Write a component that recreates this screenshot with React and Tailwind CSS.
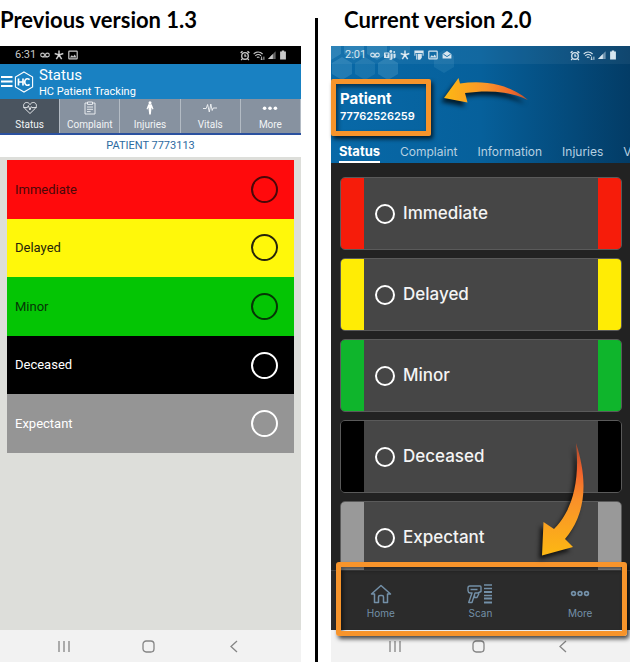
import React from "react";

const triageOld = [
  { name: "Immediate", row: "bg-[#ff0a0c] text-[#4a0808]", ring: "border-[#4a0808]" },
  { name: "Delayed", row: "bg-[#fff80a] text-[#26240a]", ring: "border-[#26240a]" },
  { name: "Minor", row: "bg-[#04c504] text-[#063506]", ring: "border-[#063506]" },
  { name: "Deceased", row: "bg-black text-white", ring: "border-white" },
  { name: "Expectant", row: "bg-[#959595] text-white", ring: "border-white" },
];

const triageNew = [
  { name: "Immediate", side: "border-x-[#f61c0a]" },
  { name: "Delayed", side: "border-x-[#ffec05]" },
  { name: "Minor", side: "border-x-[#0fb52c]" },
  { name: "Deceased", side: "border-x-black" },
  { name: "Expectant", side: "border-x-[#999999]" },
];

function Voicemail() {
  return (
    <svg width="10" height="10" viewBox="0 0 10 10" fill="none" stroke="currentColor" strokeWidth="1.1">
      <circle cx="2.6" cy="5" r="1.9" />
      <circle cx="7.4" cy="5" r="1.9" />
      <path d="M2.6 6.9h4.8" />
    </svg>
  );
}

function Burst() {
  return (
    <svg width="10" height="10" viewBox="0 0 10 10" fill="none" stroke="currentColor" strokeWidth="1.5">
      <path d="M5 5V.4M5 5L.7 3.5M5 5l4.3-1.5M5 5L2.3 9.2M5 5l2.7 4.2" />
      <circle cx="5" cy="5" r=".8" fill="#fff" stroke="none" />
    </svg>
  );
}

function Photo() {
  return (
    <svg width="10" height="10" viewBox="0 0 10 10" fill="none" stroke="currentColor" strokeWidth="1.2">
      <rect x=".8" y="1.2" width="8.4" height="7.6" rx=".6" />
      <path d="M1.8 7.6l2-2.4 1.4 1.2 1.6-2 1.6 3.2z" fill="currentColor" stroke="none" />
    </svg>
  );
}

function Teams() {
  return (
    <svg width="12" height="10" viewBox="0 0 12 10" fill="currentColor">
      <rect x="0" y="2.4" width="5.6" height="5.6" rx=".6" />
      <circle cx="6.8" cy="1.5" r="1.4" />
      <circle cx="10.2" cy="2.1" r="1" />
      <path d="M6.4 3.6h2.2v4.6c0 1-1 1.8-2.4 1.6L4.6 8.8h1.8zM9.4 3.8h2.2v3c0 1-.8 1.6-2 1.6z" />
      <path d="M1.4 4h2.8M2.8 4v3" stroke="#146aa4" strokeWidth=".9" />
    </svg>
  );
}

function Printer() {
  return (
    <svg width="10" height="10" viewBox="0 0 10 10" fill="currentColor">
      <path d="M.4.6h9.2v5.200H8.600V3H1.400v2.800h-1z" />
      <path d="M2.200 3.700h1.200v5.800H2.200zM4 3.700h3.800v4l-1.600 2H4z" />
    </svg>
  );
}

function Mail() {
  return (
    <svg width="10" height="10" viewBox="0 0 10 10" fill="currentColor">
      <path d="M.6 4L5 .9 9.4 4v4.6H.6z" />
      <path d="M1.4 4.2L5 6.6l3.6-2.4" fill="none" stroke="#146aa4" strokeWidth=".9" />
    </svg>
  );
}

function SystemIcons() {
  return (
    <span className="flex items-center gap-[3px]">
      <svg width="10" height="11" viewBox="0 0 11 11" fill="none" stroke="currentColor" strokeWidth="1.5">
        <circle cx="5.5" cy="6" r="3.6" />
        <path d="M5.5 4v2.2h1.6M.7 2.6L2.8.8M10.3 2.6L8.2.8M2.4 9.4l-1.2 1M8.6 9.4l1.2 1" />
      </svg>
      <svg width="12" height="11" viewBox="0 0 12 11" fill="none" stroke="currentColor" strokeWidth="1.1">
        <path d="M.7 4C3.3 1.4 7 1.4 9.6 4M2.3 5.8c1.8-1.6 4-1.6 5.8 0M3.9 7.5c.8-.7 1.7-.7 2.5 0" />
        <path d="M8.600 6.500v3.400M7.500 8.800l1.100 1.100 1.100-1.100M10.900 9.900V6.600" strokeWidth=".9" />
      </svg>
      <svg width="8" height="10" viewBox="0 0 9 10" fill="currentColor">
        <path d="M0 9.4L8.6.8v8.6z" opacity=".5" />
        <path d="M0 9.4l5.4-5.4v5.4z" />
      </svg>
      <svg width="8" height="10" viewBox="0 0 8 10" fill="currentColor">
        <path d="M2.800.4h2.400v1.2h1.700v8H1.100v-8h1.700z" />
      </svg>
    </span>
  );
}

function AndroidNav() {
  return (
    <nav aria-label="System navigation" className="flex h-8 shrink-0 items-center justify-around bg-[#f2f2f2] pl-[22px] pr-[25px] text-[#858585]">
      <button aria-label="Recent apps">
        <svg width="12" height="13" viewBox="0 0 12 13" stroke="currentColor" strokeWidth="1.3">
          <path d="M1 1v11M6 1v11M11 1v11" />
        </svg>
      </button>
      <button aria-label="Home screen">
        <svg width="13" height="13" viewBox="0 0 13 13" fill="none" stroke="currentColor" strokeWidth="1.3">
          <rect x="1" y="1" width="11" height="11" rx="3.2" />
        </svg>
      </button>
      <button aria-label="Back">
        <svg width="12" height="13" viewBox="0 0 12 13" fill="none" stroke="currentColor" strokeWidth="1.3">
          <path d="M9 1L3 6.5 9 12" />
        </svg>
      </button>
    </nav>
  );
}

const oldTabs = [
  {
    name: "Status",
    icon: (
      <>
        <path d="M8 12.5L2.6 7.3C.4 4.6 2 1.5 4.6 1.5 6.300 1.500 7.400 2.500 8 3.600 8.600 2.500 9.700 1.500 11.400 1.500 14 1.500 15.600 4.600 13.400 7.300z" />
        <path d="M1.400 6.600h4l1-2 1.500 4.400 1.400-3.400.7 1h4.600" />
      </>
    ),
  },
  {
    name: "Complaint",
    icon: (
      <>
        <path d="M5.500 2H3v11h10V2h-2.500M5.500 1h5v2.400h-5z" />
        <path d="M5 6h6M5 8.300h6M5 10.600h3.600" />
      </>
    ),
  },
  {
    name: "Injuries",
    icon: (
      <g fill="#ffffff" stroke="none">
        <circle cx="8" cy="1.700" r="1.500" />
        <path d="M6.300 3.300h3.400l1.800 4.600-.9.500-1.100-2-.2 2.600-.5 4.500H7.200L6.700 9l-.2-2.600-1.100 2-.9-.5z" />
      </g>
    ),
  },
  { name: "Vitals", icon: <path d="M1 7.500h3.200L5.600 3.500l1.700 7.500 1.500-8 1.400 6.500 1-2.500H15" /> },
  {
    name: "More",
    icon: (
      <g fill="#ffffff" stroke="none">
        <circle cx="2.600" cy="7.300" r="1.800" />
        <circle cx="8" cy="7.300" r="1.800" />
        <circle cx="13.400" cy="7.300" r="1.800" />
      </g>
    ),
  },
];

function PreviousApp() {
  return (
    <section className="flex min-h-0 min-w-0 flex-col font-[Roboto,sans-serif]">
      <div className="flex h-[18px] shrink-0 items-center justify-between bg-black pl-[15px] pr-[14px] text-[#c9c9c9]">
        <span className="flex items-center gap-1 text-[11px] leading-4">
          6:31 <Voicemail /> <Burst /> <Photo />
        </span>
        <SystemIcons />
      </div>
      <header className="flex h-[35px] shrink-0 items-center bg-[#1981c2] text-white">
        <button aria-label="Menu" className="w-[14px]">
          <svg width="13" height="13" viewBox="0 0 13 13" stroke="currentColor" strokeWidth="2.200">
            <path d="M1 2h11.500M1 6.500h11.500M1 11h11.500" />
          </svg>
        </button>
        <svg width="20" height="22" viewBox="0 0 20 22" fill="none" stroke="currentColor" aria-label="HC">
          <path d="M10 1l8.600 5v10L10 21l-8.600-5V6z" strokeWidth="1.100" />
          <path d="M4.500 7.500v7M9 7.500v7M4.500 11H9M15.600 8.700c-2.400-2-4.900-.6-4.900 2.300s2.500 4.300 4.900 2.300" strokeWidth="1.700" />
        </svg>
        <div className="pl-[5px]">
          <h2 className="text-[15px] leading-5">Status</h2>
          <p className="text-[11px] leading-[14px]">HC Patient Tracking</p>
        </div>
      </header>
      <nav aria-label="Sections" className="grid h-[36px] shrink-0 grid-cols-5 border-b-2 border-[#2b519f] text-[#f2f4f6]">
        {oldTabs.map((t, i) => (
          <button
            key={t.name}
            className={
              i === 0
                ? "flex flex-col items-center gap-[2px] border-r border-[#b3bbc4] bg-[#4a545f] pt-[2px]"
                : "flex flex-col items-center gap-[2px] border-r border-[#b3bbc4] bg-[#8792a0] pt-[2px]"
            }
          >
            <svg width="16" height="14" viewBox="0 0 16 14" fill="none" stroke="currentColor" strokeWidth=".9">
              {t.icon}
            </svg>
            <span className="text-[10px] leading-4">{t.name}</span>
          </button>
        ))}
      </nav>
      <h3 className="h-[22px] shrink-0 bg-white text-center text-[11px] leading-[22px] text-[#2d6a9f]">PATIENT 7773113</h3>
      <div className="flex-1 bg-[#dddeda] px-[7px] pt-[3px]">
        <div role="radiogroup" aria-label="Patient status" className="grid h-[293px] grid-rows-5">
          {triageOld.map((t) => (
            <label key={t.name} className={`${t.row} flex items-center justify-between pl-2 pr-4 text-[13px]`}>
              {t.name}
              <input
                type="radio"
                name="previous-status"
                className={`${t.ring} size-[27px] appearance-none rounded-full border-2`}
              />
            </label>
          ))}
        </div>
      </div>
      <AndroidNav />
    </section>
  );
}

function Hexagons() {
  return (
    <svg className="absolute left-0 top-0" width="140" height="60" viewBox="0 0 140 60" fill="#5fa9cf" aria-hidden="true">
      <path opacity=".3" d="M0-9l10 6v11L0 14-10 8V-3zM23-9l10 6v11l-10 6-10-6V-3zM46-9l10 6v11l-10 6-10-6V-3z" />
      <path opacity=".2" d="M69-9l10 6v11l-10 6-10-6V-3zM34 11l10 6v11l-10 6-10-6V17z" />
      <path opacity=".3" d="M11 11l10 6v11l-10 6-10-6V17zM57 11l10 6v11l-10 6-10-6V17z" />
      <path opacity=".18" d="M113 4l10 6v11l-10 6-10-6V10z" />
    </svg>
  );
}

function CurrentApp() {
  return (
    <section className="relative flex min-h-0 min-w-0 flex-col bg-[#222222] font-[Inter,sans-serif]">
      <header className="relative flex h-[117px] shrink-0 flex-col overflow-hidden bg-linear-to-r from-[#0869a8] via-[#06609b] to-[#033c66] text-white">
        <Hexagons />
        <div className="relative flex h-[18px] items-center justify-between bg-white/5 pl-[14px] pr-[13px] text-[#d7e6ef]">
          <span className="flex items-center gap-1 font-[Roboto,sans-serif] text-[11px] leading-4">
            2:01 <Voicemail /> <Teams /> <Burst /> <Printer /> <Photo /> <Mail />
          </span>
          <SystemIcons />
        </div>
        <div className="relative px-[9px] pt-[26px]">
          <h2 className="text-[15px] font-bold leading-[18px]">Patient</h2>
          <p className="text-[11px] font-semibold leading-4">77762526259</p>
        </div>
        <nav aria-label="Patient sections" className="relative mt-auto flex gap-5 pl-2 text-xs leading-[20px] text-[#b6d0e1]">
          <button className="shrink-0 border-b-2 border-white text-[13px] font-bold text-white">Status</button>
          <button className="shrink-0">Complaint</button>
          <button className="shrink-0">Information</button>
          <button className="shrink-0">Injuries</button>
          <button className="shrink-0">Vitals</button>
        </nav>
      </header>
      <div role="radiogroup" aria-label="Triage status" className="flex min-h-0 flex-1 flex-col gap-2 overflow-y-auto pl-[9px] pr-2 pt-[14px] [scrollbar-width:none]">
        {triageNew.map((t) => (
          <div key={t.name} className="shrink-0 overflow-hidden rounded-[5px] border border-[#5a5a5a]">
            <label className={`${t.side} flex h-[71px] items-center gap-2 border-x-[23px] bg-[#464646] pl-[11px] text-[17px] font-medium text-[#f4f4f4]`}>
              <input type="radio" name="current-status" className="size-5 appearance-none rounded-full border-2 border-white" />
              {t.name}
            </label>
          </div>
        ))}
      </div>
      <nav aria-label="Main" className="grid h-[60px] shrink-0 grid-cols-3 border-t border-[#444444] bg-[#2b2b2b] text-[10px] leading-4 text-[#7390a8]">
        <button className="flex flex-col items-center pt-[12px]">
          <svg width="22" height="22" viewBox="0 0 22 22" fill="none" stroke="currentColor" strokeWidth="1.500">
            <path d="M1.500 11L11 2.500l9.500 8.500h-3v8.500h-4V14q0-1.500-1.500-1.500h-2Q8.500 12.500 8.500 14v5.500h-4V11z" strokeLinejoin="round" />
          </svg>
          Home
        </button>
        <button className="flex flex-col items-center pt-[12px]">
          <svg width="26" height="22" viewBox="0 0 26 22" fill="none" stroke="currentColor" strokeWidth="1.400">
            <path d="M3 3h10q1 0 1 1v4.500l-3 1.500H8L5 19.500H1.700L5 10H3Q1 9.500 1 7.500V5Q1 3 3 3zM3.500 6.500h7M7.500 11.500v3H10l2-4" strokeLinejoin="round" />
            <path d="M17 2h8M17 5.500h8M17 12.500h8" strokeWidth="1.500" />
            <path d="M17 9h8M17 15.500h8M17 19.500h8" strokeWidth="2" />
          </svg>
          Scan
        </button>
        <button className="flex flex-col items-center pt-[12px]">
          <svg width="22" height="22" viewBox="0 0 22 22" fill="none" stroke="currentColor" strokeWidth="1.700">
            <circle cx="4.500" cy="10.500" r="1.900" />
            <circle cx="11" cy="10.500" r="1.900" />
            <circle cx="17.500" cy="10.500" r="1.900" />
          </svg>
          More
        </button>
      </nav>
      <AndroidNav />
      <div className="pointer-events-none absolute left-0 top-[33px] h-[57px] w-[100px] rounded-[2px] border-[5px] border-[#f7942b] shadow-[2px_3px_4px_rgba(0,0,0,0.7),inset_2px_3px_4px_rgba(0,0,0,0.5)]" />
      <svg className="pointer-events-none absolute left-[105px] top-[23px] drop-shadow-[-3px_4px_2px_rgba(0,0,0,0.7)]" width="100" height="45" viewBox="436 68 100 45" aria-hidden="true">
        <defs>
          <linearGradient id="upperArrow" x1="0" x2="1">
            <stop offset="0" stopColor="#fdb813" />
            <stop offset=".5" stopColor="#f9952a" />
            <stop offset=".8" stopColor="#f26a2c" />
            <stop offset="1" stopColor="#b6532f" />
          </linearGradient>
        </defs>
        <path fill="url(#upperArrow)" d="M444 97l14.500-20 1.500 5.500C482 79 508 82 528 99 510 90 488 89 465 92l2.500 9.500z" />
      </svg>
      <div className="pointer-events-none absolute bottom-[26px] left-[5px] right-[3px] h-[74px] rounded-[3px] border-[5px] border-[#f7942b] shadow-[2px_3px_4px_rgba(0,0,0,0.7),inset_2px_3px_4px_rgba(0,0,0,0.5)]" />
      <svg className="pointer-events-none absolute bottom-[96px] right-[36px] drop-shadow-[-3px_4px_2px_rgba(0,0,0,0.7)]" width="60" height="130" viewBox="534 436 60 130" aria-hidden="true">
        <defs>
          <linearGradient id="lowerArrow" x1="0" y1="1" x2="0" y2="0">
            <stop offset="0" stopColor="#fdb813" />
            <stop offset=".5" stopColor="#f9902a" />
            <stop offset=".75" stopColor="#f2622c" />
            <stop offset="1" stopColor="#a84a2d" />
          </linearGradient>
        </defs>
        <path fill="url(#lowerArrow)" d="M542 555.500l1.500-33.500 10.500 7C573 510 580 480 576 443 587 477 588 512 565 539l8 8z" />
      </svg>
    </section>
  );
}

export default function App() {
  return (
    <main className="grid h-screen grid-cols-[301fr_30px_299fr] grid-rows-[46px_minmax(0,1fr)] bg-white">
      <h1 className="whitespace-nowrap pt-[6px] font-[Lato,sans-serif] text-[22px] font-bold leading-7">Previous version 1.3</h1>
      <div className="row-span-2 mx-auto mt-[18px] w-[3px] bg-black" />
      <h1 className="whitespace-nowrap pl-[13px] pt-[6px] font-[Lato,sans-serif] text-[22px] font-bold leading-7">Current version 2.0</h1>
      <PreviousApp />
      <CurrentApp />
    </main>
  );
}
